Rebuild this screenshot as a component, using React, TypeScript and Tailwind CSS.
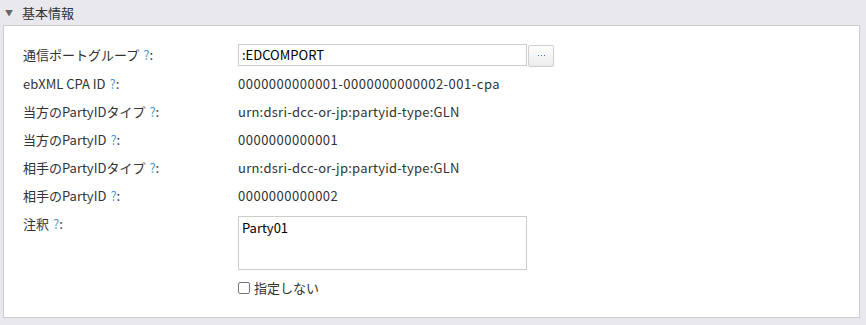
const font = { fontFamily: '"Noto Sans CJK JP", "Noto Sans", sans-serif' };

function Help() {
  return <span className="text-[#4f97d6] ml-[4px]">?</span>;
}

function Row({ label, value, wide }: { label: string; value: string; wide?: boolean }) {
  return (
    <div className="flex h-[28px] items-center">
      <div className="w-[215px]">
        {label}
        <Help />:
      </div>
      <div className={wide ? 'tracking-[0.5px]' : 'tracking-[0.25px]'}>{value}</div>
    </div>
  );
}

export default function App() {
  return (
    <div className="w-[866px] h-[325px] bg-[#e9e9ed] text-[13px] text-[#333]" style={font}>
      <div className="h-[25px] flex items-center pl-[5px]">
        <span className="text-[8px] text-[#666] w-[17px]">▼</span>
        <span className="text-[13px] text-[#333]">基本情報</span>
      </div>
      <div className="ml-[3px] mr-[6px] bg-white border border-[#cdcdcd] pl-[19px] pt-[18px] pb-[19px]">
        <div className="flex h-[22px] items-center mb-[4px]">
          <div className="w-[215px]">
            通信ポートグループ<Help />:
          </div>
          <div className="flex items-center">
            <div className="w-[289px] h-[22px] border border-[#cccccc] flex items-center px-[3px] text-black">
              :EDCOMPORT
            </div>
            <button className="ml-[1px] mt-[2px] w-[26px] h-[22px] rounded-[2px] border border-[#cfcfcf] bg-gradient-to-b from-[#fdfdfd] to-[#ececec] flex items-center justify-center gap-[2px] pb-[1px]">
              <span className="w-[1px] h-[1px] bg-[#4a6fa5]" />
              <span className="w-[1px] h-[1px] bg-[#4a6fa5]" />
              <span className="w-[1px] h-[1px] bg-[#4a6fa5]" />
            </button>
          </div>
        </div>
        <Row label="ebXML CPA ID" value="0000000000001-0000000000002-001-cpa" wide />
        <Row label="当方のPartyIDタイプ" value="urn:dsri-dcc-or-jp:partyid-type:GLN" />
        <Row label="当方のPartyID" value="0000000000001" wide />
        <Row label="相手のPartyIDタイプ" value="urn:dsri-dcc-or-jp:partyid-type:GLN" />
        <Row label="相手のPartyID" value="0000000000002" wide />
        <div className="flex items-start mt-[4px]">
          <div className="w-[215px] leading-[20px]">
            注釈<Help />:
          </div>
          <div className="mt-[2px]">
            <div className="w-[289px] h-[54px] border border-[#cccccc] px-[3px] pt-[2px] text-black leading-[18px]">
              Party01
            </div>
            <label className="flex items-center h-[20px] mt-[8px]">
              <span className="w-[12px] h-[12px] border border-[#777] rounded-[2px] bg-white" />
              <span className="ml-[4px]">指定しない</span>
            </label>
          </div>
        </div>
      </div>
    </div>
  );
}
